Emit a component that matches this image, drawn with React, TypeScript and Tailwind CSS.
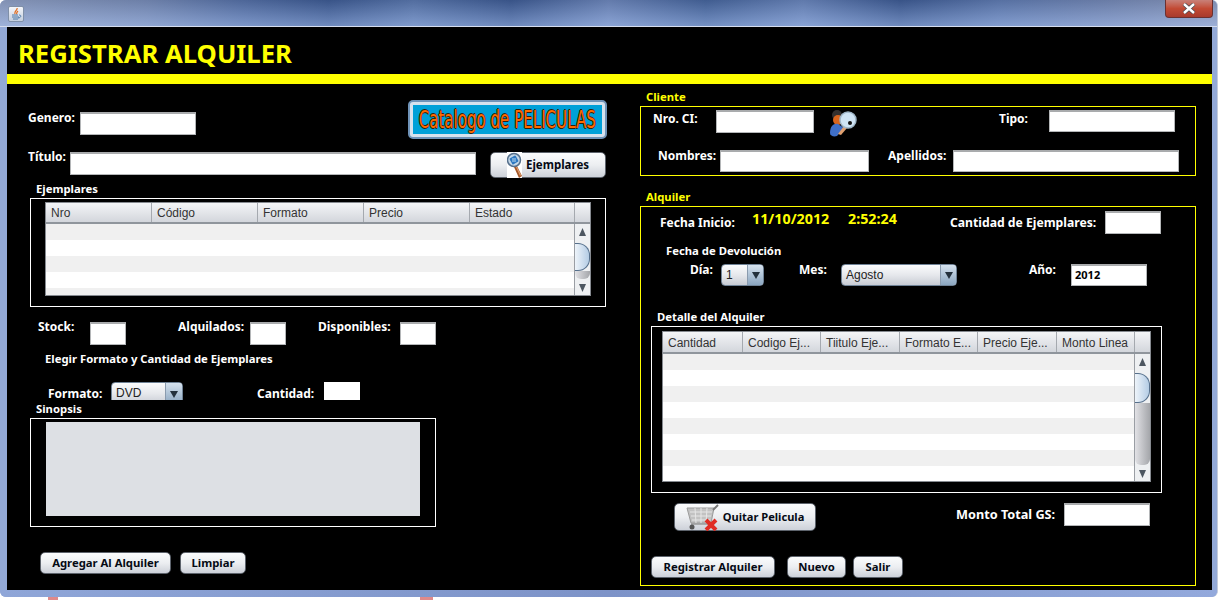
import type { ReactNode } from "react";

const sans = "font-['Noto_Sans','Liberation_Sans',sans-serif]";

function Label({ className = "", children }: { className?: string; children: ReactNode }) {
  return <div className={`shrink-0 whitespace-nowrap text-[12px] leading-[18px] font-bold text-white ${className}`}>{children}</div>;
}

function SmallLabel({ className = "", children }: { className?: string; children: ReactNode }) {
  return <div className={`shrink-0 whitespace-nowrap text-[11.3px] leading-4 font-bold ${className}`}>{children}</div>;
}

function Field({ className = "", children }: { className?: string; children?: ReactNode }) {
  return (
    <div className={`shrink-0 bg-white border border-[#b4b6b8] border-t-2 border-t-[#a9abad] pl-[3px] text-[11px] leading-[18px] font-bold text-black ${className}`}>
      {children}
    </div>
  );
}

function Btn({ className = "", children }: { className?: string; children: ReactNode }) {
  return (
    <div className={`shrink-0 flex items-center justify-center rounded-[5px] border border-[#5d636c] bg-gradient-to-b from-[#fbfcfd] via-[#eceef1] to-[#cdd1d9] text-[11.3px] font-bold text-[#050a14] whitespace-nowrap ${className}`}>
      {children}
    </div>
  );
}

function Combo({ className = "", value, arrow }: { className?: string; value: string; arrow: string }) {
  return (
    <div className={`shrink-0 flex rounded-[4px] border border-[#6f8296] overflow-hidden bg-gradient-to-b from-[#fbfcfd] via-[#e6e8ec] to-[#c8ccd4] ${className}`}>
      <div className="flex-1 pl-1 font-['Liberation_Sans',sans-serif] text-[12px] leading-[21px] text-[#222]">{value}</div>
      <div className={`flex items-center justify-center border-l border-[#8a9bae] bg-gradient-to-b from-[#d6e2ee] to-[#8ba6c0] ${arrow}`}>
        <svg width="8" height="8" viewBox="0 0 8 8"><path d="M0 1h8L4 8z" fill="#23303c" /></svg>
      </div>
    </div>
  );
}

function Arrow({ up }: { up?: boolean }) {
  return (
    <div className="h-[15px] shrink-0 flex items-center justify-center">
      <svg width="7" height="8" viewBox="0 0 7 8"><path d={up ? "M3.5 0L7 8H0z" : "M0 0h7L3.5 8z"} fill="#4c5660" /></svg>
    </div>
  );
}

type Col = { title: string; w: string };

function Grid({ cols, rows, thumb, rest, size, head }: { cols: Col[]; rows: number; thumb: string; rest: string; size: string; head: string }) {
  return (
    <div className={`flex flex-col bg-white border border-[#868a90] font-['Liberation_Sans',sans-serif] ${size}`}>
      <div className={`flex shrink-0 border-b-2 border-[#8f959c] bg-gradient-to-b from-[#f4f5f7] to-[#d3d6dc] ${head}`}>
        {cols.map((c) => (
          <div key={c.title} className={`${c.w} shrink-0 border-r border-[#a5a9af] pl-[5px] text-[12px] text-[#333] whitespace-nowrap overflow-hidden`}>
            {c.title}
          </div>
        ))}
        <div className="flex-1" />
      </div>
      <div className="flex flex-1 min-h-0">
        <div className="flex-1 overflow-hidden">
          {Array.from({ length: rows }, (_, i) => (
            <div key={i} className={i % 2 === 0 ? "h-4 bg-[#f0f0f0]" : "h-4 bg-white"} />
          ))}
        </div>
        <div className="w-[16px] shrink-0 flex flex-col border-l border-[#9a9ea4] bg-[#eef0f2]">
          <Arrow up />
          <div className={`mt-1 shrink-0 rounded-r-[12px] border border-l-0 border-[#56708c] bg-gradient-to-r from-[#eef4fa] to-[#b4cce4] ${thumb}`} />
          <div className={`shrink-0 rounded-b-[6px] bg-gradient-to-r from-[#e2e2e6] to-[#a4a6aa] ${rest}`} />
          <div className="flex-1" />
          <Arrow />
        </div>
      </div>
    </div>
  );
}

function LensIcon() {
  return (
    <svg width="15" height="26" viewBox="0 0 15 26" className="shrink-0 bg-white">
      <path d="M7 15l3-1 5 10-3 2z" fill="#a5582a" />
      <path d="M9 15l1 0 4 8-1 1z" fill="#e0a070" />
      <circle cx="7" cy="8" r="6.5" fill="#c5d8e8" stroke="#56708c" strokeWidth="1.5" />
      <rect x="3.5" y="4.5" width="7" height="7" rx="1" transform="rotate(-30 7 8)" fill="#2e78c0" />
      <path d="M5 7h4M5 9h4" stroke="#bcdcf4" strokeWidth="1" />
    </svg>
  );
}

function PersonLensIcon() {
  return (
    <svg width="29" height="27" viewBox="0 0 29 27" className="shrink-0">
      <circle cx="8" cy="5" r="5" fill="#33302e" />
      <circle cx="9" cy="10" r="5" fill="#d8641c" />
      <path d="M1 23c0-7 4-10 8-9l6 4-7 8c-3 1-7 0-7-3z" fill="#3f6fc8" />
      <path d="M9 24l6-8 3 2-6 7z" fill="#e0a070" />
      <circle cx="19" cy="10" r="8" fill="#cfe4f4" stroke="#9fb6c8" strokeWidth="1.5" />
      <circle cx="21" cy="13" r="2" fill="#111" />
    </svg>
  );
}

function CartIcon() {
  return (
    <svg width="35" height="27" viewBox="0 0 35 27" className="shrink-0">
      <path d="M1 4h27l-3 15H5z" fill="#c2c2c2" stroke="#9a9a9a" />
      <path d="M4 8h22M5 12h20M6 16h18M9 4l1 15M15 4v15M21 4l-1 15" stroke="#e6e6e6" strokeWidth="1" />
      <path d="M27 6l5-5" stroke="#777" strokeWidth="2" />
      <path d="M5 20h20" stroke="#999" strokeWidth="1.5" />
      <circle cx="6" cy="23" r="2.5" fill="#555" />
      <path d="M20 16l10 10M30 16L20 26" stroke="#e02c24" strokeWidth="4" />
    </svg>
  );
}

function JavaIcon() {
  return (
    <div className="w-[16px] h-[16px] rounded-[2px] border border-[#8090a8] bg-gradient-to-b from-[#f4f6fa] to-[#c4cede] flex items-center justify-center">
      <svg width="12" height="13" viewBox="0 0 12 13">
        <path d="M7 0c1 2-3 3-2 6M8 3C7 4 6 5 7 6" stroke="#e06a1c" strokeWidth="1.2" fill="none" />
        <path d="M2 7h6M2 9h7M3 11h5M9 7c3 0 2 3-1 3" stroke="#4a78a8" strokeWidth="1" fill="none" />
      </svg>
    </div>
  );
}

const ejemplaresCols: Col[] = [
  { title: "Nro", w: "w-[106px]" },
  { title: "Código", w: "w-[106px]" },
  { title: "Formato", w: "w-[106px]" },
  { title: "Precio", w: "w-[106px]" },
  { title: "Estado", w: "w-[105px]" },
];

const detalleCols: Col[] = [
  { title: "Cantidad", w: "w-[80px]" },
  { title: "Codigo Ej...", w: "w-[78px]" },
  { title: "Tiitulo Eje...", w: "w-[79px]" },
  { title: "Formato E...", w: "w-[78px]" },
  { title: "Precio Eje...", w: "w-[79px]" },
  { title: "Monto Linea", w: "w-[78px]" },
];

function LeftPanel() {
  return (
    <div className="w-[633px] shrink-0 flex flex-col">
      {/* genero + catalogo */}
      <div className="flex h-[39px] mt-4 ml-[21px]">
        <Label className="w-[52px] mt-[9px]">Genero:</Label>
        <Field className="w-[116px] h-[23px] mt-3" />
        <div className="ml-[212px] w-[199px] h-[39px] rounded-[5px] border-2 border-[#6f93b8] bg-[#d6e2ee] p-[3px]">
          <div className="h-full bg-[#00a0d8] flex items-center justify-center">
            <span className="shrink-0 font-['DejaVu_Sans',sans-serif] [font-stretch:condensed] text-[25px] leading-none text-[#ff6a00] whitespace-nowrap scale-x-[0.67] [text-shadow:1px_0_0_#30200c,-1px_0_0_#30200c,0_1px_0_#30200c,0_-1px_0_#30200c]">
              Catalogo de PELICULAS
            </span>
          </div>
        </div>
      </div>
      {/* titulo */}
      <div className="flex h-[30px] mt-[9px] ml-[21px]">
        <Label className="w-[42px]">Título:</Label>
        <Field className="w-[406px] h-[23px] mt-1" />
        <Btn className="w-[116px] h-[26px] mt-1 ml-[14px] gap-[4px]">
          <LensIcon />
          <span className="text-[11.5px]">Ejemplares</span>
        </Btn>
      </div>
      <SmallLabel className="mt-[3px] ml-[29px] text-white">Ejemplares</SmallLabel>
      <div className="mt-px ml-[23px] w-[576px] h-[109px] border border-white px-[14px] pt-[3px]">
        <Grid cols={ejemplaresCols} rows={5} size="w-[546px] h-[94px]" head="h-[21px] leading-[21px]" thumb="h-[28px]" rest="h-[8px]" />
      </div>
      {/* stock */}
      <div className="flex h-[27px] mt-[11px] ml-[31px]">
        <Label className="w-[52px]">Stock:</Label>
        <Field className="w-[36px] h-[23px] mt-1" />
        <Label className="ml-[52px] w-[72px]">Alquilados:</Label>
        <Field className="w-[36px] h-[23px] mt-1" />
        <Label className="ml-8 w-[82px]">Disponibles:</Label>
        <Field className="w-[36px] h-[23px] mt-1" />
      </div>
      <SmallLabel className="mt-[6px] ml-[38px] text-white">Elegir Formato y Cantidad de Ejemplares</SmallLabel>
      {/* formato */}
      <div className="flex h-[18px] mt-[15px] ml-[41px]">
        <Label className="w-[63px] mt-[3px]">Formato:</Label>
        <div className="w-[72px] h-[18px] overflow-hidden">
          <Combo className="w-[72px] h-[23px]" value="DVD" arrow="w-[17px]" />
        </div>
        <Label className="ml-[74px] w-[67px] mt-[3px]">Cantidad:</Label>
        <div className="w-[36px] bg-white" />
      </div>
      <SmallLabel className="mt-px ml-[29px] text-white">Sinopsis</SmallLabel>
      <div className="mt-px ml-[23px] w-[406px] h-[109px] border border-white pl-[15px] pt-[3px]">
        <div className="w-[374px] h-[94px] bg-[#dde0e4]" />
      </div>
      <div className="flex mt-[25px] ml-[33px]">
        <Btn className="w-[131px] h-[22px]">Agregar Al Alquiler</Btn>
        <Btn className="w-[66px] h-[22px] ml-[9px]">Limpiar</Btn>
      </div>
    </div>
  );
}

function RightPanel() {
  return (
    <div className="flex-1 flex flex-col">
      <SmallLabel className="mt-[5px] ml-[6px] text-[#ffff00]">Cliente</SmallLabel>
      <div className="mt-px w-[556px] h-[70px] border border-[#ffff00]">
        <div className="flex h-[26px] mt-[3px] ml-3">
          <Label className="w-[63px]">Nro. CI:</Label>
          <Field className="w-[98px] h-[23px]" />
          <div className="ml-[15px] w-[29px]"><PersonLensIcon /></div>
          <Label className="ml-[141px] w-[50px]">Tipo:</Label>
          <Field className="w-[126px] h-[22px]" />
        </div>
        <div className="flex h-[25px] mt-[11px] ml-[17px]">
          <Label className="w-[62px]">Nombres:</Label>
          <Field className="w-[149px] h-[22px] mt-[3px]" />
          <Label className="ml-[19px] w-[65px]">Apellidos:</Label>
          <Field className="w-[226px] h-[22px] mt-[3px]" />
        </div>
      </div>
      <SmallLabel className="mt-[13px] ml-[6px] text-[#ffff00]">Alquiler</SmallLabel>
      <div className="mt-px w-[556px] h-[380px] border border-[#ffff00]">
        <div className="flex h-[23px] mt-1 ml-[19px]">
          <Label className="w-[92px] mt-[3px]">Fecha Inicio:</Label>
          <Label className="w-[96px] !text-[14.3px] !leading-4 !text-[#ffff00]">11/10/2012</Label>
          <Label className="w-[102px] !text-[14.3px] !leading-4 !text-[#ffff00]">2:52:24</Label>
          <Label className="w-[155px] mt-[3px] !text-[12.2px]">Cantidad de Ejemplares:</Label>
          <Field className="w-[56px] h-[23px]" />
        </div>
        <SmallLabel className="mt-[9px] ml-[25px] text-white">Fecha de Devolución</SmallLabel>
        <div className="flex h-[25px] mt-[2px] ml-[49px]">
          <Label className="w-[31px]">Día:</Label>
          <Combo className="w-[43px] h-[22px] mt-[3px]" value="1" arrow="w-[16px]" />
          <Label className="ml-[35px] w-[42px]">Mes:</Label>
          <Combo className="w-[116px] h-[22px] mt-[3px]" value="Agosto" arrow="w-[16px]" />
          <Label className="ml-[72px] w-[42px]">Año:</Label>
          <Field className="w-[76px] h-[22px] mt-[3px]">2012</Field>
        </div>
        <SmallLabel className="mt-[23px] ml-4 text-white">Detalle del Alquiler</SmallLabel>
        <div className="mt-px ml-[10px] w-[511px] h-[167px] border border-white px-[10px] pt-1">
          <Grid cols={detalleCols} rows={8} size="w-[489px] h-[151px]" head="h-[22px] leading-[22px]" thumb="h-[30px]" rest="h-[62px]" />
        </div>
        <div className="flex h-[28px] mt-[10px] ml-[33px]">
          <Btn className="w-[142px] h-[28px] gap-[2px]">
            <CartIcon />
            <span className="text-[11.1px]">Quitar Pelicula</span>
          </Btn>
          <Label className="ml-[140px] w-[108px] mt-[2px] !text-[12.7px]">Monto Total GS:</Label>
          <Field className="w-[86px] h-[23px]" />
        </div>
        <div className="flex mt-[25px] ml-[10px]">
          <Btn className="w-[124px] h-[22px]">Registrar Alquiler</Btn>
          <Btn className="w-[59px] h-[22px] ml-3">Nuevo</Btn>
          <Btn className="w-[50px] h-[22px] ml-[7px]">Salir</Btn>
        </div>
      </div>
    </div>
  );
}

export default function App() {
  return (
    <div className={`w-[1220px] h-[600px] overflow-hidden bg-white flex flex-col ${sans}`}>
      <div className="w-[1218px] h-[597px] shrink-0 flex flex-col rounded-[6px] border-r border-[#c4ccdc] bg-[#93a9d6]">
        {/* title bar */}
        <div className="h-[27px] shrink-0 flex justify-between rounded-t-[6px] border-b border-[#d5ddee] bg-[linear-gradient(180deg,rgba(40,60,110,0.3),rgba(150,175,225,0.55)),linear-gradient(90deg,#a9b6d0_0%,#8a9cc0_12%,#5d78aa_20%,#3f5d92_27%,#6482b4_34%,#3f5d92_42%,#7d96c6_50%,#4a6a9e_58%,#7894c6_66%,#3f5d92_74%,#6a86b8_82%,#8295bd_90%,#a4afca_100%)]">
          <div className="ml-2 mt-[6px]"><JavaIcon /></div>
          <div className="mr-1 w-[48px] h-[18px] rounded-b-[4px] border border-t-0 border-[#6b3030] bg-gradient-to-b from-[#c88078] via-[#c24a34] to-[#a83a2c] flex items-center justify-center">
            <svg width="14" height="11" viewBox="0 0 14 11">
              <path d="M2 1l10 9M12 1L2 10" stroke="#4a4a52" strokeWidth="4" />
              <path d="M2 1l10 9M12 1L2 10" stroke="#ffffff" strokeWidth="2.4" />
            </svg>
          </div>
        </div>
        <div className="flex-1 min-h-0 pl-[7px] pr-[5px]">
          <div className="h-full bg-black flex flex-col">
            <div className="h-[47px] shrink-0 pl-[11px] pt-[10px] text-[25.7px] leading-[33px] font-bold text-[#ffff00] whitespace-nowrap">
              REGISTRAR ALQUILER
            </div>
            <div className="h-[10px] shrink-0 bg-[#ffff00]" />
            <div className="flex flex-1 min-h-0">
              <LeftPanel />
              <RightPanel />
            </div>
          </div>
        </div>
        <div className="h-[7px] shrink-0 rounded-b-[6px] bg-gradient-to-r from-[#8fa6d8] via-[#7d93c8] to-[#93a9dc]" />
      </div>
      {/* bits of the desktop below the window */}
      <div className="flex h-[3px] shrink-0">
        <div className="ml-[48px] w-[10px] bg-[#e08a8a]" />
        <div className="ml-[362px] w-[13px] bg-[#e08a8a]" />
      </div>
    </div>
  );
}
